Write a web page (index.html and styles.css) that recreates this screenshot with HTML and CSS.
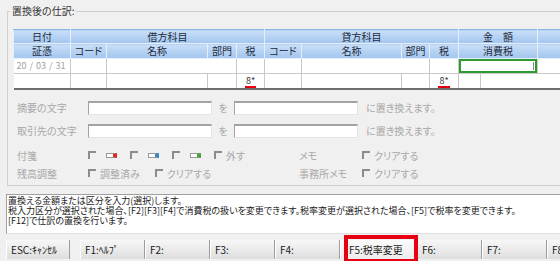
FILE: index.html
```html
<!DOCTYPE html>
<html lang="ja">
<head>
  <meta charset="UTF-8" />
  <meta name="viewport" content="width=device-width, initial-scale=1.0" />
  <title>置換後の仕訳</title>
  <link rel="stylesheet" href="styles.css">
</head>
<body>
  <div class="window">
    <fieldset class="group">
      <legend>置換後の仕訳:</legend>

      <table class="journal">
        <colgroup>
          <col class="w-date">
          <col class="w-code">
          <col class="w-name">
          <col class="w-dept">
          <col class="w-tax">
          <col class="w-code2">
          <col class="w-name2">
          <col class="w-dept2">
          <col class="w-tax2">
          <col class="w-amt1">
          <col class="w-amt2">
          <col class="w-rest">
        </colgroup>
        <thead>
          <tr class="head1">
            <th>日付</th>
            <th colspan="4">借方科目</th>
            <th colspan="4">貸方科目</th>
            <th colspan="2">金　額</th>
            <th></th>
          </tr>
          <tr class="head2">
            <th>証憑</th>
            <th>コード</th>
            <th>名称</th>
            <th>部門</th>
            <th>税</th>
            <th>コード</th>
            <th>名称</th>
            <th>部門</th>
            <th>税</th>
            <th colspan="2">消費税</th>
            <th></th>
          </tr>
        </thead>
        <tbody>
          <tr class="row1">
            <td class="date">20 / 03 / 31</td>
            <td></td>
            <td colspan="2"></td>
            <td></td>
            <td></td>
            <td colspan="2"></td>
            <td></td>
            <td colspan="2" class="active"><div class="edit"><span class="caret"></span></div></td>
            <td></td>
          </tr>
          <tr class="row2">
            <td></td>
            <td></td>
            <td></td>
            <td></td>
            <td class="tax"><span>8*</span></td>
            <td></td>
            <td></td>
            <td></td>
            <td class="tax"><span>8*</span></td>
            <td></td>
            <td colspan="2" class="last"></td>
          </tr>
        </tbody>
      </table>

      <div class="replace">
        <div class="replace-row">
          <span class="label">摘要の文字</span>
          <span class="field"></span>
          <span class="wo">を</span>
          <span class="field"></span>
          <span class="tail">に置き換えます。</span>
        </div>
        <div class="replace-row">
          <span class="label">取引先の文字</span>
          <span class="field"></span>
          <span class="wo">を</span>
          <span class="field"></span>
          <span class="tail">に置き換えます。</span>
        </div>
      </div>

      <div class="options">
        <span class="label">付箋</span>
        <div class="items">
          <span class="tag-item"><span class="check"></span><span class="sticky red"></span></span>
          <span class="tag-item"><span class="check"></span><span class="sticky blue"></span></span>
          <span class="tag-item"><span class="check"></span><span class="sticky green"></span></span>
          <span class="opt"><span class="check"></span>外す</span>
        </div>
        <span class="label">メモ</span>
        <div class="items">
          <span class="opt"><span class="check"></span>クリアする</span>
        </div>

        <span class="label">残高調整</span>
        <div class="items">
          <span class="opt"><span class="check"></span>調整済み</span>
          <span class="opt"><span class="check"></span>クリアする</span>
        </div>
        <span class="label">事務所メモ</span>
        <div class="items">
          <span class="opt"><span class="check"></span>クリアする</span>
        </div>
      </div>
    </fieldset>

    <div class="message">
      <div>置換える金額または区分を入力(選択)します。</div>
      <div>税入力区分が選択された場合、[F2][F3][F4]で消費税の扱いを変更できます。税率変更が選択された場合、[F5]で税率を変更できます。</div>
      <div>[F12]で仕訳の置換を行います。</div>
    </div>

    <div class="fkeys">
      <button class="fkey esc">ESC:ｷｬﾝｾﾙ</button>
      <button class="fkey">F1:ﾍﾙﾌﾟ</button>
      <button class="fkey">F2:</button>
      <button class="fkey">F3:</button>
      <button class="fkey">F4:</button>
      <button class="fkey marked">F5:税率変更</button>
      <button class="fkey">F6:</button>
      <button class="fkey">F7:</button>
      <button class="fkey">F8:</button>
    </div>
  </div>
</body>
</html>
```

FILE: styles.css
```css
body {
  margin: 0;
  background: #f0f0f0;
  font-family: "Noto Sans CJK JP", "Noto Sans", sans-serif;
  font-feature-settings: "palt";
  color: #222;
  overflow: hidden;
}

.window {
  width: 560px;
  height: 261px;
  overflow: hidden;
}

/* group box */
.group {
  margin: 5px 0 0 7px;
  padding: 12px 0 5px 5px;
  width: 640px;
  border: 1px solid #d0d0d0;
  border-right: none;
  min-width: 0;
}

.group legend {
  margin-left: -3px;
  padding: 0 2px;
  font-size: 10px;
  line-height: 12px;
  color: #333;
}

/* journal grid */
.journal {
  border-collapse: collapse;
  table-layout: fixed;
  width: 600px;
  font-size: 10px;
}

.w-date { width: 57px; }
.w-code { width: 36px; }
.w-name { width: 101px; }
.w-dept { width: 29px; }
.w-tax { width: 28px; }
.w-code2 { width: 37px; }
.w-name2 { width: 100px; }
.w-dept2 { width: 28px; }
.w-tax2 { width: 29px; }
.w-amt1 { width: 22px; }
.w-amt2 { width: 57px; }
.w-rest { width: 76px; }

.journal th {
  padding: 0;
  font-weight: normal;
  color: #1e2a3a;
  background: linear-gradient(#c9dff8, #a2c5ef);
  border: 1px solid #e6eefa;
  border-top-color: #8fb4e3;
  white-space: nowrap;
  overflow: hidden;
}

.head1 th {
  height: 13px;
  line-height: 13px;
}

.head2 th {
  height: 14px;
  line-height: 14px;
  border-top-color: #e6eefa;
}

.journal td {
  padding: 0;
  background: #fff;
  border: 1px solid #c9c9c9;
  height: 14px;
  line-height: 14px;
  text-align: center;
  white-space: nowrap;
  overflow: hidden;
}

.journal tbody td:first-child {
  border-left: none;
}

.journal .row2 td {
  height: 12px;
  line-height: 12px;
  border-bottom: 2px solid #6e6e6e;
}

.journal td.last {
  border-right: none;
}

.journal td.date {
  color: #a0a0a0;
  font-size: 9px;
  text-align: left;
  padding-left: 3px;
  word-spacing: 1px;
}

.journal td.active {
  padding: 0;
}

.edit {
  height: 14px;
  box-sizing: border-box;
  border: 2px solid #2f9a2f;
  display: flex;
  justify-content: flex-end;
  align-items: center;
  padding-right: 1px;
}

.caret {
  width: 1px;
  height: 8px;
  background: #888;
}

.tax span {
  display: inline-block;
  line-height: 10px;
  font-size: 9px;
  color: #333;
  padding: 0 1px;
  border-bottom: 2px solid #e60012;
}

/* replace rows */
.replace {
  margin-top: 10px;
  padding-left: 4px;
}

.replace-row {
  display: flex;
  align-items: center;
  height: 15px;
  font-size: 10px;
  color: #a8a8a8;
}

.replace-row + .replace-row {
  margin-top: 8px;
}

.label {
  width: 71px;
  font-size: 10px;
  color: #a8a8a8;
  white-space: nowrap;
}

.field {
  width: 124px;
  height: 14px;
  box-sizing: border-box;
  background: #fff;
  border-top: 2px solid #a3a3a3;
  border-left: 1px solid #a3a3a3;
  border-right: 1px solid #e4e4e4;
  border-bottom: 1px solid #e4e4e4;
}

.wo {
  width: 22px;
  text-align: center;
}

.tail {
  margin-left: 8px;
}

/* option checkboxes */
.options {
  margin-top: 10px;
  padding-left: 4px;
  display: grid;
  grid-template-columns: 71px 211px 63px auto;
  grid-auto-rows: 14px;
  row-gap: 4px;
  align-items: center;
  font-size: 10px;
  color: #a8a8a8;
}

.items {
  display: flex;
  align-items: center;
}

.check {
  display: inline-block;
  width: 8px;
  height: 8px;
  box-sizing: border-box;
  border-top: 2px solid #8c8c8c;
  border-left: 2px solid #8c8c8c;
}

.tag-item {
  display: flex;
  align-items: center;
  gap: 10px;
  margin-right: 13px;
}

.sticky {
  width: 11px;
  height: 5px;
  box-sizing: border-box;
  border: 1px solid #9a9a9a;
  background: #fff;
}

.sticky.red { border-right: 4px solid #e02a2a; }
.sticky.blue { border-right: 4px solid #3a86c8; }
.sticky.green { border-right: 4px solid #4aa43a; }

.opt {
  display: flex;
  align-items: center;
  gap: 4px;
  margin-right: 15px;
  white-space: nowrap;
}

/* guidance text */
.message {
  margin: 8px 0 0 6px;
  width: 620px;
  height: 40px;
  box-sizing: border-box;
  padding: 1px 0 0 1px;
  background: #fff;
  border: 1px solid #a0a0a0;
  border-right: none;
  border-bottom-color: #e0e0e0;
  font-size: 9px;
  line-height: 10px;
  color: #1a1a1a;
  white-space: nowrap;
}

.message div {
  height: 10px;
}

/* function keys */
.fkeys {
  display: flex;
  margin: 6px 0 0 6px;
  height: 19px;
}

.fkey {
  width: 65px;
  flex: none;
  height: 19px;
  padding: 0 0 0 4px;
  text-align: left;
  font-family: inherit;
  font-size: 10px;
  color: #1a1a1a;
  background: linear-gradient(#f7f7f7, #dedede);
  border: none;
  border-left: 1px solid #fff;
  border-right: 1px solid #9c9c9c;
  white-space: nowrap;
}

.fkey.esc {
  width: 64px;
  margin-right: 10px;
}

.fkey.marked {
  position: relative;
  width: 77px;
  padding-left: 8px;
  background: linear-gradient(#fafafa, #ececec);
}

.fkey.marked::after {
  content: "";
  position: absolute;
  left: 3px;
  right: -2px;
  top: -5px;
  bottom: -4px;
  border: 4px solid #e60012;
}
```
